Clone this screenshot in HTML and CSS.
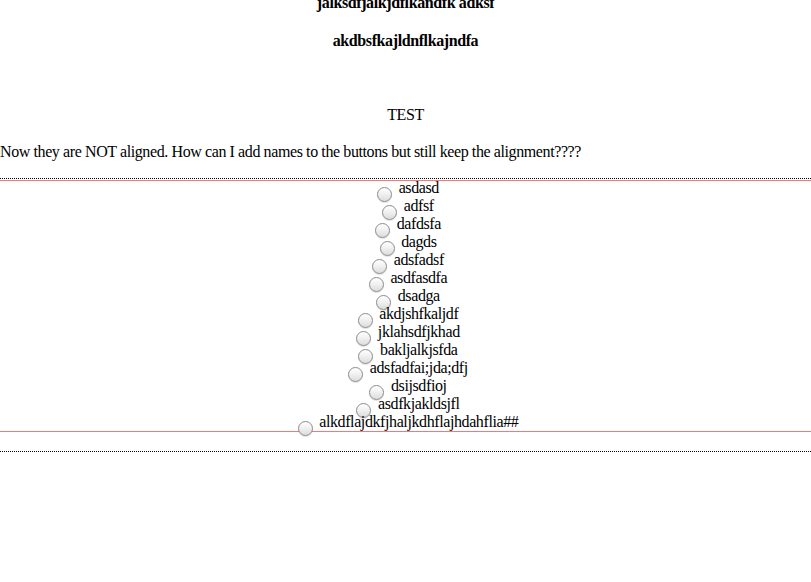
FILE: index.html
```html
<!DOCTYPE html>
<html>
<head>
<meta charset="utf-8">
<link rel="stylesheet" href="styles.css">
</head>
<body>
<div class="page">
  <h4 class="title first">jalksdfjalkjdflkandfk adksf</h4>
  <h4 class="title">akdbsfkajldnflkajndfa</h4>
  <div class="test">TEST</div>
  <p class="note">Now they are NOT aligned. How can I add names to the buttons but still keep the alignment????</p>
  <div class="outer">
    <div class="inner">
      <div class="list">
        <label class="row"><input type="radio" name="r" class="radio"> asdasd</label>
        <label class="row"><input type="radio" name="r" class="radio"> adfsf</label>
        <label class="row"><input type="radio" name="r" class="radio"> dafdsfa</label>
        <label class="row"><input type="radio" name="r" class="radio"> dagds</label>
        <label class="row"><input type="radio" name="r" class="radio"> adsfadsf</label>
        <label class="row"><input type="radio" name="r" class="radio"> asdfasdfa</label>
        <label class="row"><input type="radio" name="r" class="radio"> dsadga</label>
        <label class="row"><input type="radio" name="r" class="radio"> akdjshfkaljdf</label>
        <label class="row"><input type="radio" name="r" class="radio"> jklahsdfjkhad</label>
        <label class="row"><input type="radio" name="r" class="radio"> bakljalkjsfda</label>
        <label class="row"><input type="radio" name="r" class="radio"> adsfadfai;jda;dfj</label>
        <label class="row"><input type="radio" name="r" class="radio"> dsijsdfioj</label>
        <label class="row"><input type="radio" name="r" class="radio"> asdfkjakldsjfl</label>
        <label class="row"><input type="radio" name="r" class="radio"> alkdflajdkfjhaljkdhflajhdahflia##</label>
      </div>
    </div>
  </div>
</div>
</body>
</html>
```
FILE: styles.css
```css
html, body {
  margin: 0;
  padding: 0;
  background: #fff;
}
body {
  font-family: "Liberation Serif", "Times New Roman", serif;
  font-size: 16px;
  line-height: 18px;
  letter-spacing: -0.4px;
  color: #000;
  overflow: hidden;
}
.page {
  width: 811px;
}
.title {
  font-size: 16px;
  font-weight: bold;
  text-align: center;
  margin: 0 0 20px;
  line-height: 18px;
}
.title.first {
  margin-top: -6px;
}
.test {
  text-align: center;
  margin-top: 56px;
}
.note {
  margin: 19px 0 17px;
}
.outer {
  border-top: 1px dotted #000;
  border-bottom: 1px dotted #000;
  padding: 1px 0 19px;
}
.inner {
  border-top: 1px solid #f47a7a;
  border-bottom: 1px solid #f47a7a;
}
.list {
  margin-top: -2px;
  text-align: center;
}
.row {
  display: block;
  height: 18px;
  line-height: 18px;
  white-space: nowrap;
}
.radio {
  -webkit-appearance: none;
  appearance: none;
  box-sizing: border-box;
  width: 15px;
  height: 15px;
  margin: 0 3px -9px 5px;
  padding: 0;
  vertical-align: baseline;
  border: 1px solid #8c8c8c;
  border-radius: 50%;
  background: linear-gradient(#ffffff 0%, #f1f1f1 45%, #dcdcdc 100%);
  box-shadow: 0 1px 1px rgba(0, 0, 0, 0.12);
}
```
